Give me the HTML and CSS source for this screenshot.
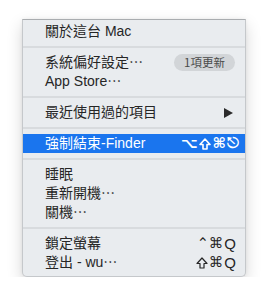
FILE: index.html
```html
<!DOCTYPE html>
<html lang="zh-Hant">
<head>
<meta charset="utf-8">
<link rel="stylesheet" href="styles.css">
</head>
<body>
<div class="menu">
  <div class="item"><span class="label">關於這台 Mac</span></div>
  <div class="sep"></div>
  <div class="item"><span class="label">系統偏好設定⋯</span><span class="badge">1項更新</span></div>
  <div class="item"><span class="label">App Store⋯</span></div>
  <div class="sep"></div>
  <div class="item"><span class="label">最近使用過的項目</span><span class="arrow"></span></div>
  <div class="sep"></div>
  <div class="item active"><span class="label">強制結束-Finder</span><span class="keys wide"><span class="sym">⌥</span><svg class="shift" viewBox="0 0 12 12" aria-hidden="true"><path d="M6 1 L11 6.5 H8 V11 H4 V6.5 H1 Z"/></svg><span class="sym">⌘</span><span class="sym">⎋</span></span></div>
  <div class="sep"></div>
  <div class="item"><span class="label">睡眠</span></div>
  <div class="item"><span class="label">重新開機⋯</span></div>
  <div class="item"><span class="label">關機⋯</span></div>
  <div class="sep"></div>
  <div class="item"><span class="label">鎖定螢幕</span><span class="keys"><span class="sym">⌃</span><span class="sym">⌘</span><span class="key">Q</span></span></div>
  <div class="item"><span class="label">登出 - wu⋯</span><span class="keys"><svg class="shift" viewBox="0 0 12 12" aria-hidden="true"><path d="M6 1 L11 6.5 H8 V11 H4 V6.5 H1 Z"/></svg><span class="sym">⌘</span><span class="key">Q</span></span></div>
</div>
</body>
</html>
```

FILE: styles.css
```css
html, body {
  margin: 0;
  padding: 0;
  background: #ffffff;
}
body {
  padding: 19px 0 0 22px;
  font-family: "Liberation Sans", "Noto Sans CJK TC", sans-serif;
}
.menu {
  width: 224px;
  box-sizing: border-box;
  background: #e9ecef;
  border: 1px solid #c5c8cb;
  border-top: 1px solid #a9acaf;
  border-radius: 0 0 5px 5px;
  padding: 2px 0 4px 0;
  box-shadow: 0 6px 16px rgba(0, 0, 0, 0.16), 0 0 4px rgba(0, 0, 0, 0.06);
  color: #262626;
}
.item {
  height: 19px;
  display: flex;
  align-items: center;
  padding: 0 8px 0 22px;
  font-size: 14px;
  white-space: nowrap;
}
.label {
  flex: 1;
  line-height: 19px;
}
.sep {
  height: 12px;
  display: flex;
  align-items: center;
}
.sep::before {
  content: "";
  display: block;
  height: 2px;
  width: 100%;
  background: #d8dbde;
}
.badge {
  height: 17px;
  line-height: 17px;
  padding: 0 10px;
  border-radius: 9px;
  background: #d2d5d8;
  color: #4a4a4a;
  font-size: 11.5px;
  font-family: "Noto Sans CJK TC", sans-serif;
  margin-right: 2px;
}
.arrow {
  width: 0;
  height: 0;
  border-top: 5px solid transparent;
  border-bottom: 5px solid transparent;
  border-left: 9px solid #2b2b2b;
  margin-right: 4px;
}
.keys {
  display: flex;
  align-items: center;
  margin-right: 1px;
}
.sym {
  font-family: "DejaVu Sans", sans-serif;
  font-size: 14.5px;
  line-height: 19px;
}
.shift {
  width: 12px;
  height: 12px;
  margin: 0 1px;
  fill: none;
  stroke: currentColor;
  stroke-width: 1.2;
  stroke-linejoin: round;
}
.wide .sym {
  margin-left: 1px;
}
.key {
  font-size: 15px;
  margin-left: 1px;
}
.active {
  background: #1a75ee;
  color: #ffffff;
}
.active .sym {
  font-weight: bold;
}
.active .shift {
  stroke-width: 1.6;
}
.active .keys {
  margin-right: -2px;
}
```
